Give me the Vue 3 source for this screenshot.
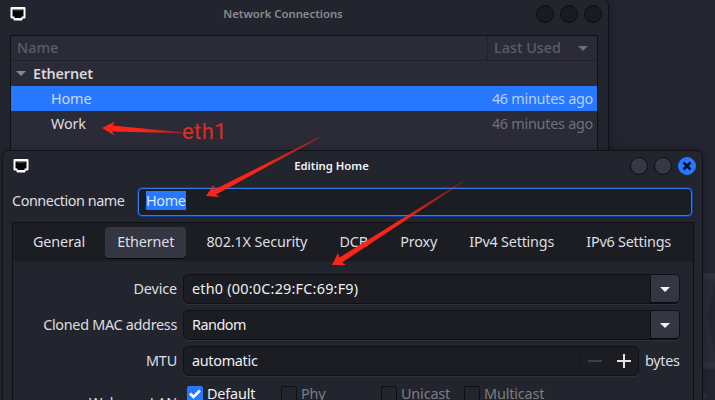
<script setup>
const rows = [
  { name: 'Home', used: '46 minutes ago', selected: true },
  { name: 'Work', used: '46 minutes ago', selected: false },
]
const tabs = ['General', 'Ethernet', '802.1X Security', 'DCB', 'Proxy', 'IPv4 Settings', 'IPv6 Settings']
const combos = [
  { label: 'Device', value: 'eth0 (00:0C:29:FC:69:F9)', kind: 'device' },
  { label: 'Cloned MAC address', value: 'Random', kind: 'mac' },
]
const wakeOptions = [
  { label: 'Default', checked: true },
  { label: 'Phy', checked: false },
  { label: 'Unicast', checked: false },
  { label: 'Multicast', checked: false },
]
</script>

<template>
  <div class="desktop">
    <svg class="wallpaper" width="14" height="130" viewBox="0 0 14 130">
      <path d="M0 3H14V14L6 47L14 84V99H0Z" fill="#2a2b35" />
      <path d="M0 6H14M0 95H14" stroke="#2f303a" stroke-width="6" />
      <path d="M0 126h5" stroke="#2f303a" stroke-width="5" />
    </svg>

    <section class="window connections">
      <header class="titlebar">
        <svg class="port" width="16" height="14" viewBox="0 0 16 14">
          <path d="M1 .5H15V11H12V13H4V11H1Z" fill="#fff" stroke="#fff" stroke-linejoin="round" />
          <path d="M2.500 2.500H13.500V9.500H11.500V11H4.500V9.500H2.500Z" fill="#050607" />
          <path d="M5 2V4M7 2V4M9 2V4M11 2V4" stroke="#8a8775" stroke-width=".8" />
        </svg>
        <h1>Network Connections</h1>
        <div class="controls"><i></i><i></i><i></i></div>
      </header>
      <div class="list">
        <div class="row head">
          <span class="name">Name</span>
          <span class="used"><span>Last Used</span><svg width="10" height="5" viewBox="0 0 10 5"><path d="M0 0H10L5 5Z" fill="#6b6e74" /></svg></span>
        </div>
        <div class="row group">
          <svg width="10" height="5" viewBox="0 0 10 5"><path d="M0 0H10L5 5Z" fill="#85878b" /></svg>
          <span>Ethernet</span>
        </div>
        <div v-for="row in rows" :key="row.name" class="row item" :class="{ selected: row.selected }">
          <span class="name">{{ row.name }}</span>
          <span class="used">{{ row.used }}</span>
        </div>
      </div>
    </section>

    <section class="window editor">
      <header class="titlebar">
        <svg class="port" width="16" height="14" viewBox="0 0 16 14">
          <path d="M1 .5H15V11H12V13H4V11H1Z" fill="#fff" stroke="#fff" stroke-linejoin="round" />
          <path d="M2.500 2.500H13.500V9.500H11.500V11H4.500V9.500H2.500Z" fill="#050607" />
          <path d="M5 2V4M7 2V4M9 2V4M11 2V4" stroke="#8a8775" stroke-width=".8" />
        </svg>
        <h1>Editing Home</h1>
        <div class="controls">
          <i></i><i></i>
          <i class="close"><svg width="10" height="10" viewBox="0 0 10 10"><path d="M1.500 1.500L8.500 8.500M8.500 1.500L1.500 8.500" stroke="#07122c" stroke-width="2.500" /></svg></i>
        </div>
      </header>
      <div class="connection">
        <label>Connection name</label>
        <div class="entry"><span>Home</span></div>
      </div>
      <div class="notebook">
        <nav>
          <span v-for="tab in tabs" :key="tab" class="tab" :class="{ active: tab === 'Ethernet', ip: tab.startsWith('IP') }">{{ tab }}</span>
        </nav>
        <div class="form">
          <div v-for="combo in combos" :key="combo.label" class="field" :class="combo.kind">
            <label>{{ combo.label }}</label>
            <div class="box combo">
              <span>{{ combo.value }}</span>
              <b><svg width="10" height="5" viewBox="0 0 10 5"><path d="M0 0H10L5 5Z" fill="#f2f2f3" /></svg></b>
            </div>
          </div>
          <div class="field">
            <label>MTU</label>
            <div class="box spin">
              <span>automatic</span>
              <b><svg width="14" height="14" viewBox="0 0 14 14"><path d="M0 7H14" stroke="#3d4045" stroke-width="2" /></svg></b>
              <b><svg width="14" height="14" viewBox="0 0 14 14"><path d="M0 7H14M7 0V14" stroke="#e3e3e4" stroke-width="2" /></svg></b>
            </div>
            <span class="unit">bytes</span>
          </div>
          <div class="field wake">
            <label>Wake on LAN</label>
            <div class="checks">
              <span v-for="option in wakeOptions" :key="option.label" class="check" :class="{ on: option.checked }">
                <i><svg v-if="option.checked" width="12" height="10" viewBox="0 0 12 10"><path d="M1 4.500L4.500 8L11 1.500" fill="none" stroke="#fff" stroke-width="2.600" /></svg></i>
                {{ option.label }}
              </span>
            </div>
          </div>
        </div>
      </div>
    </section>

    <svg class="arrows" width="715" height="400" viewBox="0 0 715 400">
      <defs>
        <linearGradient id="fadeA" gradientUnits="userSpaceOnUse" x1="102" y1="128" x2="182" y2="133"><stop offset=".5" stop-color="#fb2418" /><stop offset="1" stop-color="#fb2418" stop-opacity=".5" /></linearGradient>
        <linearGradient id="fadeB" gradientUnits="userSpaceOnUse" x1="206" y1="196" x2="319" y2="138"><stop offset=".5" stop-color="#fb2418" /><stop offset="1" stop-color="#fb2418" stop-opacity=".5" /></linearGradient>
        <linearGradient id="fadeC" gradientUnits="userSpaceOnUse" x1="332" y1="265" x2="463" y2="182"><stop offset=".5" stop-color="#fb2418" /><stop offset="1" stop-color="#fb2418" stop-opacity=".3" /></linearGradient>
      </defs>
      <path d="M102 128L115 121.500L112.500 125.500L182 132.300V133.200L112 131.500L114.500 135.500Z" fill="url(#fadeA)" />
      <path d="M206 196L213.500 185L214.500 189.500L319 137L319.500 138L216 194.500L219.500 197Z" fill="url(#fadeB)" />
      <path d="M332 265L338 253L339.500 257.500L463 181L463.500 182L342 262.500L346 265Z" fill="url(#fadeC)" />
    </svg>
    <span class="note">eth1</span>
  </div>
</template>

<style>
body { overflow: hidden; background: #242530; }
</style>

<style scoped>
* { box-sizing: border-box; }
.desktop { position: relative; width: 715px; height: 400px; overflow: hidden; background: #242530; font: 14.4px/20px "Noto Sans", sans-serif; letter-spacing: -.15px; color: #dedfe0; white-space: nowrap; }
.wallpaper { position: absolute; right: 0; top: 270px; }
svg { display: block; flex: none; }
.window { position: absolute; background: #23252e; }
.connections { left: 0; top: 0; width: 609px; height: 170px; border-right: 1px solid #111218; border-radius: 5px 5px 0 0; padding: 0 10px; box-shadow: 2px 0 8px rgba(0,0,0,.25); }
.editor { left: 2px; top: 150px; width: 701px; height: 270px; border: 1px solid #101117; border-radius: 6px 6px 0 0; padding: 0 9px; box-shadow: 0 0 10px rgba(0,0,0,.25); }
.titlebar { display: flex; align-items: center; }
.connections .titlebar { height: 35px; padding-bottom: 7px; margin-right: -4px; }
.editor .titlebar { height: 35px; padding-bottom: 5px; margin-right: -3px; padding-left: 1px; }
h1 { flex: 1; margin: 0; padding-left: 4px; font-size: 11.3px; line-height: 16px; font-weight: 600; text-align: center; letter-spacing: 0; }
.connections h1 { color: #8a8b8e; }
.editor h1 { color: #f4f4f5; }
.controls { display: flex; gap: 6px; }
.controls i { display: grid; place-items: center; width: 18px; height: 18px; border-radius: 50%; border: 1px solid #0d0e12; background: #1a1b20; }
.editor .controls i { background: #363943; }
.editor .controls .close { background: #2777ff; border-color: #2777ff; }
.list { width: 588px; height: 130px; border: 1px solid #0f1015; background: #2a2b36; }
.row { display: flex; align-items: center; height: 25px; }
.head { border-bottom: 1px solid #20222a; font-weight: 500; color: #5c5e65; letter-spacing: 0; }
.head .name { flex: 1; padding-left: 6px; }
.head .used { display: flex; align-items: center; justify-content: space-between; width: 110px; height: 24px; padding: 0 9px 0 6px; border-left: 1px solid #20222a; }
.group { gap: 7px; padding-left: 5px; font-weight: 600; color: #d5d6d8; }
.item { justify-content: space-between; padding: 0 4px 0 40px; }
.item .used { color: #6c727c; letter-spacing: -.26px; }
.item.selected { background: #2777ff; color: #c5dcff; }
.item.selected .used { color: #b4d1ff; }
.connection { display: flex; align-items: center; height: 31px; margin-bottom: 5px; }
.connection label { width: 126px; padding-bottom: 1px; letter-spacing: -.46px; }
.entry { display: flex; align-items: center; width: 554px; flex: none; height: 28px; border: 1px solid #2f7bea; border-radius: 4px; background: #1b1d24; padding: 0 0 2px 7px; box-shadow: 0 0 0 1px #0b3d9e; }
.entry span { background: #2777ff; color: #d9e8ff; line-height: 19px; letter-spacing: -.35px; }
.notebook { width: 682px; border: 1px solid #101117; height: 200px; }
nav { display: flex; align-items: center; height: 39px; background: #1b1d23; border-bottom: 1px solid #1e2027; padding: 0 8px; gap: 8.2px; }
.tab { padding: 5px 12px 6px; height: 31px; line-height: 20px; border-radius: 4px; }
.tab.active { background: #343742; box-shadow: 0 1px #08090c; }
.tab.ip { letter-spacing: -.22px; }
.form { display: grid; gap: 6px; padding: 12px 13px; }
.field { display: flex; align-items: center; height: 30px; }
.field label { width: 151px; text-align: right; margin-right: 6px; }
.mac label { letter-spacing: -.3px; }
.box { display: flex; align-items: center; height: 30px; border: 1px solid #101116; border-radius: 5px; background: #1b1d23; padding-left: 8px; box-shadow: 0 1px #30323b; color: #efeff0; }
.box span { flex: 1; letter-spacing: -.3px; }
.mac .box span { letter-spacing: -.5px; }
.device .box span { letter-spacing: .22px; }
.box b { display: grid; place-items: center; width: 29px; height: 28px; }
.combo { width: 497px; }
.combo b { background: #343742; border-left: 1px solid #101116; border-bottom: 1px solid #08090c; border-radius: 0 4px 4px 0; padding-top: 2px; }
.spin { width: 456px; }
.spin b { border-left: 1px solid #17191e; }
.unit { margin-left: 6px; letter-spacing: -.3px; }
.wake { height: 40px; align-items: flex-start; }
.wake label { padding-top: 11px; }
.checks { display: grid; grid-template-columns: 94px 100px 83px 120px; padding: 2px 0 0 4px; }
.check { display: flex; align-items: center; gap: 4px; color: #7b7d81; }
.check.on { color: #efeff0; }
.check i { display: grid; place-items: center; width: 16px; height: 16px; border: 1px solid #0e0f14; border-radius: 2px; }
.check.on i { background: #2777ff; border-color: #2777ff; }
.arrows { position: absolute; left: 0; top: 0; }
.note { position: absolute; left: 182px; top: 120px; font: 22px/24px Roboto, sans-serif; letter-spacing: .4px; color: #e02c25; }
</style>
